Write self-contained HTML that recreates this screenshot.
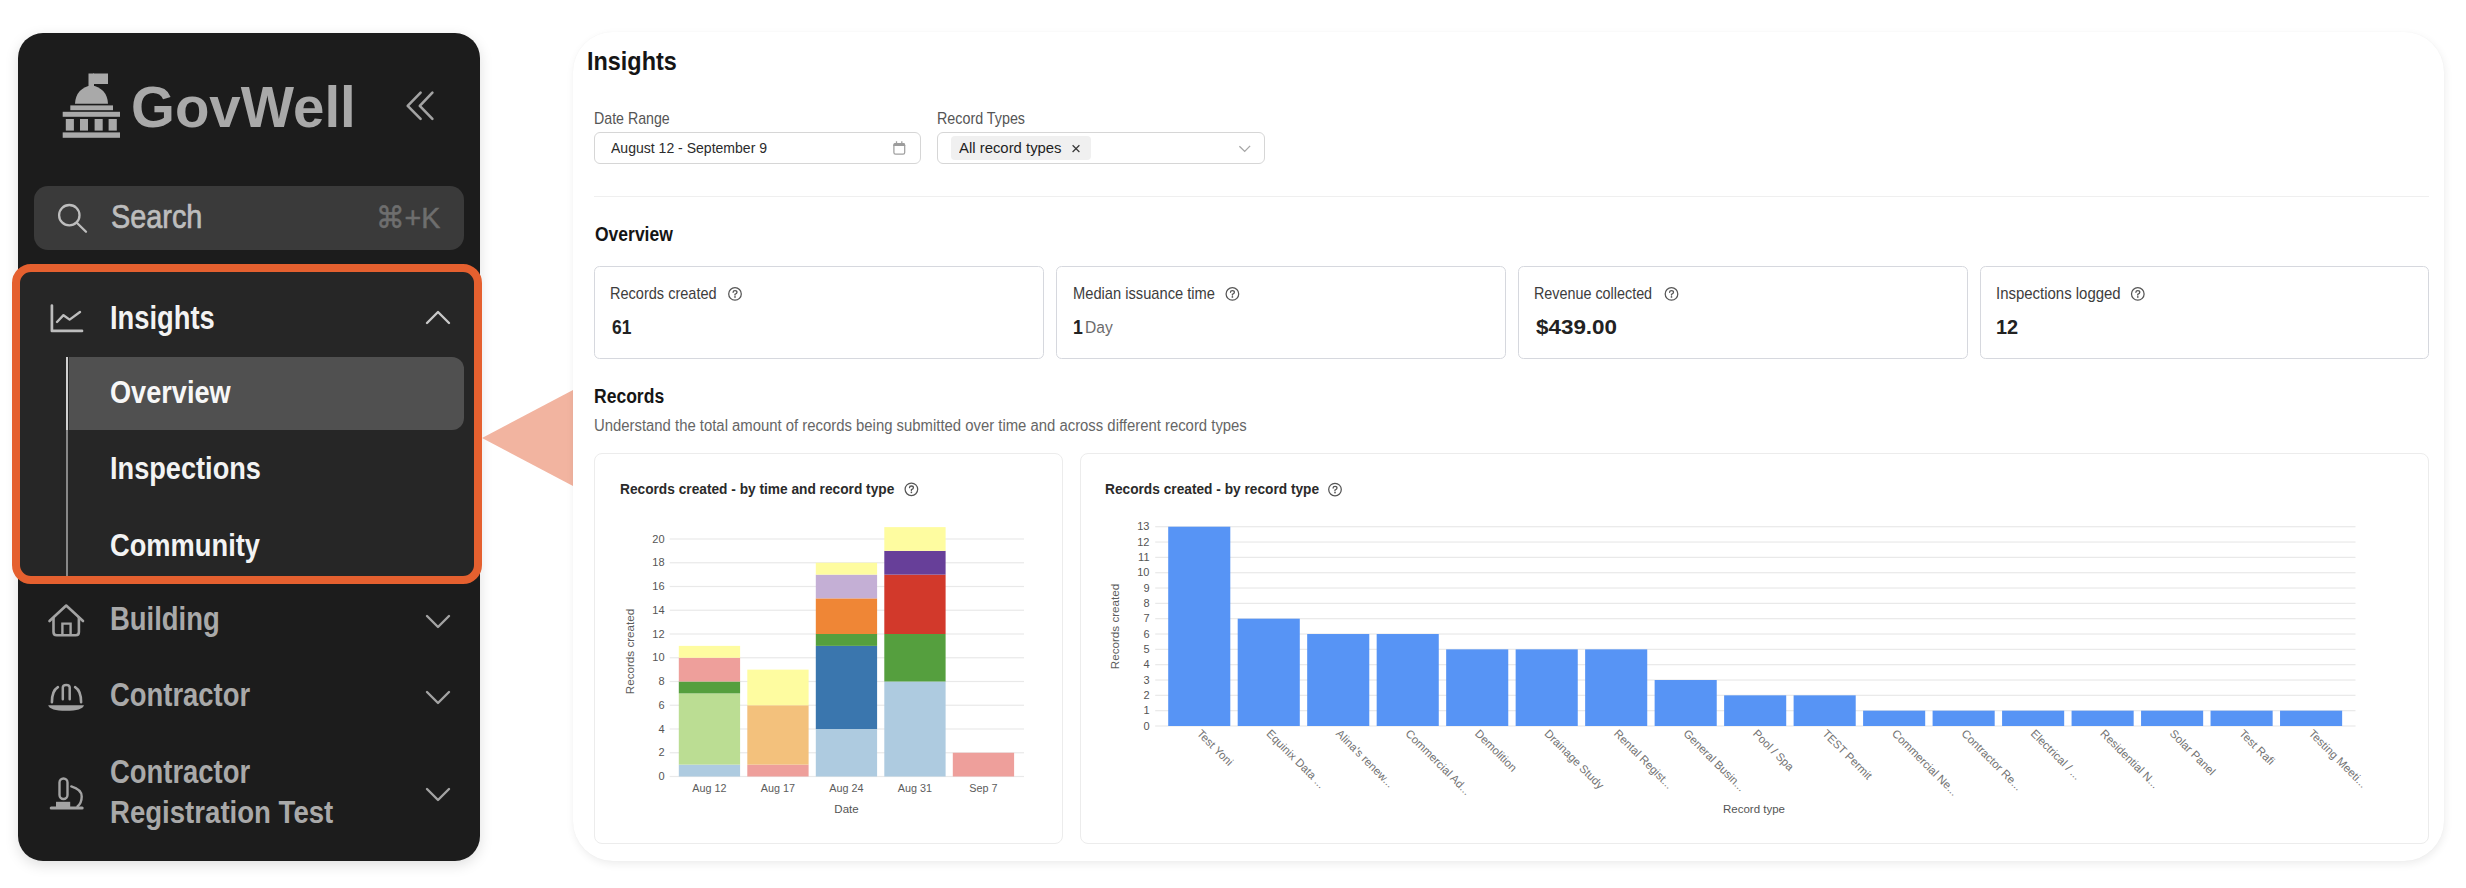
<!DOCTYPE html>
<html><head><meta charset="utf-8"><style>
html,body{margin:0;padding:0;}
body{width:2466px;height:888px;overflow:hidden;position:relative;background:#fff;font-family:"Liberation Sans", sans-serif;}
.t{position:absolute;white-space:nowrap;line-height:1;transform-origin:0 0;}
</style></head><body>
<div style="position:absolute;left:18px;top:33px;width:462px;height:827.5px;background:#1c1c1c;border-radius:25px;box-shadow:0 4px 14px rgba(0,0,0,0.13);"></div>
<svg style="position:absolute;left:0;top:0" width="480" height="888">
<rect x="88.5" y="73.5" width="5.5" height="14" fill="#a9a9a9"/>
<rect x="93" y="73.5" width="15" height="10.5" fill="#a9a9a9"/>
<path d="M75 103.8 A16.5 18 0 0 1 108 103.8 Z" fill="#a9a9a9"/>
<rect x="70.3" y="105.4" width="42.7" height="4.8" fill="#a9a9a9"/>
<rect x="62.7" y="111.8" width="57.3" height="5" fill="#a9a9a9"/>
<rect x="65.8" y="119" width="8.1" height="11.6" fill="#a9a9a9"/>
<rect x="80" y="119" width="8" height="11.6" fill="#a9a9a9"/>
<rect x="94.6" y="119" width="8.1" height="11.6" fill="#a9a9a9"/>
<rect x="108.6" y="119" width="8.2" height="11.6" fill="#a9a9a9"/>
<rect x="62.7" y="132.4" width="57.3" height="5.4" fill="#a9a9a9"/>
<path d="M420.6 92.7 L407.7 105.9 L420.6 118.9 M432.4 92.7 L419.8 105.9 L432.4 118.9" stroke="#a3a3a3" stroke-width="2.6" fill="none" stroke-linecap="round" stroke-linejoin="round"/>
</svg>
<div class="t" style="left:130.60px;top:78.29px;font-size:58px;font-weight:700;color:#a9a9a9;transform:scaleX(0.973);">GovWell</div>
<div style="position:absolute;left:34px;top:186px;width:430px;height:64px;background:#3a3a3a;border-radius:14px;"></div>
<svg style="position:absolute;left:0;top:0" width="480" height="888">
<circle cx="69.3" cy="215.2" r="10.2" stroke="#bdbdbd" stroke-width="2.3" fill="none"/>
<path d="M76.8 222.7 L86 231.8" stroke="#bdbdbd" stroke-width="2.3" stroke-linecap="round"/>
</svg>
<div class="t" style="left:110.60px;top:201.11px;font-size:32.7px;font-weight:400;color:#bdbdbd;transform:scaleX(0.882);-webkit-text-stroke:0.7px #bdbdbd;">Search</div>
<div class="t" style="left:375.60px;top:203.40px;font-size:30px;font-weight:400;color:#6e6e6e;transform:scaleX(0.953);-webkit-text-stroke:0.5px #6e6e6e;">&#8984;+K</div>
<div style="position:absolute;left:12.2px;top:263.5px;width:470px;height:320.5px;box-sizing:border-box;border:8.3px solid #e5602f;border-radius:19px;background:#262626;"></div>
<div style="position:absolute;left:66.3px;top:357px;width:2.2px;height:218.5px;background:#888;"></div>
<div style="position:absolute;left:66.3px;top:357px;width:2.2px;height:72.5px;background:#d0d0d0;"></div>
<div style="position:absolute;left:68.6px;top:357px;width:395.4px;height:72.5px;background:#505050;border-radius:0 12px 12px 0;"></div>
<svg style="position:absolute;left:0;top:0" width="480" height="888">
<path d="M51.9 305.5 V330.9 H82" stroke="#bdbdbd" stroke-width="2.7" fill="none" stroke-linecap="round" stroke-linejoin="round"/>
<path d="M57 322 L63.5 315.2 L69.6 319.6 L80 312" stroke="#bdbdbd" stroke-width="2.4" fill="none" stroke-linecap="round" stroke-linejoin="round"/>
<path d="M427 323 L438 312 L449 323" stroke="#c8c8c8" stroke-width="2.4" fill="none" stroke-linecap="round" stroke-linejoin="round"/>
</svg>
<div class="t" style="left:110.20px;top:301.57px;font-size:32.4px;font-weight:700;color:#f3f3f3;transform:scaleX(0.843);">Insights</div>
<div class="t" style="left:110.20px;top:376.81px;font-size:31.4px;font-weight:700;color:#f7f7f7;transform:scaleX(0.864);">Overview</div>
<div class="t" style="left:110.20px;top:452.41px;font-size:32px;font-weight:700;color:#f3f3f3;transform:scaleX(0.849);">Inspections</div>
<div class="t" style="left:110.20px;top:528.91px;font-size:32px;font-weight:700;color:#f3f3f3;transform:scaleX(0.852);">Community</div>
<svg style="position:absolute;left:0;top:0" width="480" height="888">
<path d="M49.5 621 L66.2 605.5 L83 621" stroke="#a3a3a3" stroke-width="2.6" fill="none" stroke-linecap="round" stroke-linejoin="round"/>
<path d="M53.5 617 V632 Q53.5 635.2 56.7 635.2 H75.7 Q78.9 635.2 78.9 632 V617" stroke="#a3a3a3" stroke-width="2.6" fill="none" stroke-linejoin="round"/>
<path d="M62.4 635.2 V623.6 H70.6 V635.2" stroke="#a3a3a3" stroke-width="2.4" fill="none"/>
<path d="M427 616 L438 627 L449 616" stroke="#a3a3a3" stroke-width="2.4" fill="none" stroke-linecap="round" stroke-linejoin="round"/>
<path d="M427 692 L438 703 L449 692" stroke="#a3a3a3" stroke-width="2.4" fill="none" stroke-linecap="round" stroke-linejoin="round"/>
<path d="M427 789 L438 800 L449 789" stroke="#a3a3a3" stroke-width="2.4" fill="none" stroke-linecap="round" stroke-linejoin="round"/>
<path d="M51.9 702.3 Q51.9 690.8 57.9 687.2 M81.1 702.3 Q81.1 690.8 75.1 687.2" stroke="#a3a3a3" stroke-width="2.6" fill="none" stroke-linecap="round"/>
<path d="M62.8 699.3 V687.6 Q62.8 684.9 66.25 684.9 Q69.7 684.9 69.7 687.6 V699.3" stroke="#a3a3a3" stroke-width="2.5" fill="none" stroke-linecap="round"/>
<path d="M48.2 705.3 H84 Q82.5 710.8 66 710.8 Q49.8 710.8 48.2 705.3 Z" fill="#a3a3a3"/>
<rect x="59.5" y="778.5" width="8" height="20.5" rx="4" stroke="#a3a3a3" stroke-width="2.4" fill="none"/>
<path d="M71.3 786.4 Q81.7 789.5 81.7 796.5 Q81.7 803 77.5 806.5" stroke="#a3a3a3" stroke-width="2.4" fill="none" stroke-linecap="round"/>
<rect x="56" y="801.8" width="14.2" height="5.5" fill="#a3a3a3"/>
<path d="M51.2 808.1 H82.2" stroke="#a3a3a3" stroke-width="3" stroke-linecap="round"/>
</svg>
<div class="t" style="left:110.30px;top:602.93px;font-size:32.8px;font-weight:700;color:#a9a9a9;transform:scaleX(0.837);">Building</div>
<div class="t" style="left:110.30px;top:679.23px;font-size:32.8px;font-weight:700;color:#a9a9a9;transform:scaleX(0.836);">Contractor</div>
<div class="t" style="left:109.90px;top:755.73px;font-size:32.8px;font-weight:700;color:#a9a9a9;transform:scaleX(0.836);">Contractor</div>
<div class="t" style="left:109.90px;top:796.41px;font-size:32px;font-weight:700;color:#a9a9a9;transform:scaleX(0.862);">Registration Test</div>
<svg style="position:absolute;left:0;top:0" width="600" height="888"><polygon points="482,438 573,390 573,486" fill="#f2b4a0"/></svg>
<div style="position:absolute;left:572.5px;top:32px;width:1871.7px;height:828.6px;background:#fff;border-radius:40px;box-shadow:1px 3px 9px rgba(0,0,0,0.075), 0 0 1.5px rgba(0,0,0,0.04);"></div>
<div class="t" style="left:586.80px;top:48.69px;font-size:25.4px;font-weight:700;color:#151515;transform:scaleX(0.922);">Insights</div>
<div class="t" style="left:594.20px;top:110.81px;font-size:15.7px;font-weight:400;color:#555;transform:scaleX(0.905);">Date Range</div>
<div class="t" style="left:937.00px;top:110.61px;font-size:15.7px;font-weight:400;color:#555;transform:scaleX(0.912);">Record Types</div>
<div style="position:absolute;left:594.3px;top:132.2px;width:326.5px;height:31.4px;box-sizing:border-box;border:1px solid #d6d6d6;border-radius:6px;background:#fff;"></div>
<div style="position:absolute;left:936.8px;top:132.2px;width:327.8px;height:31.4px;box-sizing:border-box;border:1px solid #d6d6d6;border-radius:6px;background:#fff;"></div>
<div class="t" style="left:610.90px;top:140.26px;font-size:15.4px;font-weight:400;color:#2b2b2b;transform:scaleX(0.912);">August 12 - September 9</div>
<div style="position:absolute;left:951.1px;top:136.3px;width:140.2px;height:23.3px;background:#f0f0f0;border-radius:4px;"></div>
<div class="t" style="left:959.30px;top:140.16px;font-size:15.4px;font-weight:400;color:#1f1f1f;transform:scaleX(0.967);">All record types</div>
<svg style="position:absolute;left:0;top:0" width="1300" height="200">
<rect x="893.9" y="143.6" width="10.8" height="10.6" rx="1.6" stroke="#a0a0a0" stroke-width="1.25" fill="none"/>
<path d="M893.3 145.2 Q893.3 143 895.5 143 H903 Q905.2 143 905.2 145.2 V145.9 H893.3 Z" fill="#9c9c9c"/>
<path d="M896.5 141.2 V143.5 M901.8 141.2 V143.5" stroke="#a0a0a0" stroke-width="1.3"/>
<path d="M1072.6 145.2 L1079.4 152 M1079.4 145.2 L1072.6 152" stroke="#3a3a3a" stroke-width="1.25"/>
<path d="M1239.4 146.3 L1244.7 151.4 L1250.1 145.9" stroke="#a6a6a6" stroke-width="1.35" fill="none"/>
</svg>
<div style="position:absolute;left:594px;top:196.2px;width:1835px;height:1px;background:#efefef;"></div>
<div class="t" style="left:594.50px;top:225.00px;font-size:19.6px;font-weight:700;color:#151515;transform:scaleX(0.893);">Overview</div>
<div style="position:absolute;left:594.0px;top:266.3px;width:450.3px;height:92.3px;box-sizing:border-box;border:1px solid #d6d8de;border-radius:5.5px;background:#fff;"></div>
<div class="t" style="left:610.40px;top:285.51px;font-size:15.7px;font-weight:400;color:#3d3d3d;transform:scaleX(0.926);">Records created</div>
<div class="t" style="left:611.80px;top:316.81px;font-size:20.3px;font-weight:700;color:#222;transform:scaleX(0.858);">61</div>
<div style="position:absolute;left:1056.4px;top:266.3px;width:449.6px;height:92.3px;box-sizing:border-box;border:1px solid #d6d8de;border-radius:5.5px;background:#fff;"></div>
<div class="t" style="left:1072.60px;top:285.51px;font-size:15.7px;font-weight:400;color:#3d3d3d;transform:scaleX(0.936);">Median issuance time</div>
<div class="t" style="left:1072.50px;top:316.81px;font-size:20.3px;font-weight:700;color:#222;transform:scaleX(0.871);">1</div>
<div class="t" style="left:1085.00px;top:319.78px;font-size:16.8px;font-weight:400;color:#6b6b6b;transform:scaleX(0.93);">Day</div>
<div style="position:absolute;left:1517.8px;top:266.3px;width:450.0px;height:92.3px;box-sizing:border-box;border:1px solid #d6d8de;border-radius:5.5px;background:#fff;"></div>
<div class="t" style="left:1534.10px;top:285.51px;font-size:15.7px;font-weight:400;color:#3d3d3d;transform:scaleX(0.915);">Revenue collected</div>
<div class="t" style="left:1535.50px;top:316.81px;font-size:20.3px;font-weight:700;color:#222;transform:scaleX(1.105);">$439.00</div>
<div style="position:absolute;left:1980.0px;top:266.3px;width:449.0px;height:92.3px;box-sizing:border-box;border:1px solid #d6d8de;border-radius:5.5px;background:#fff;"></div>
<div class="t" style="left:1996.10px;top:285.51px;font-size:15.7px;font-weight:400;color:#3d3d3d;transform:scaleX(0.953);">Inspections logged</div>
<div class="t" style="left:1996.00px;top:316.81px;font-size:20.3px;font-weight:700;color:#222;transform:scaleX(0.98);">12</div>
<svg style="position:absolute;left:0;top:0" width="2466" height="400"><circle cx="735.0" cy="293.9" r="6.3" stroke="#555" stroke-width="1.25" fill="none"/><path d="M733.1 292.29999999999995 Q733.1 290.59999999999997 735.0 290.59999999999997 Q737.0 290.59999999999997 737.0 292.29999999999995 Q737.0 293.59999999999997 735.0 294.29999999999995 V295.09999999999997" stroke="#555" stroke-width="1.3" fill="none" stroke-linecap="round"/><circle cx="735.0" cy="296.9" r="0.85" fill="#555"/><circle cx="1232.4" cy="293.9" r="6.3" stroke="#555" stroke-width="1.25" fill="none"/><path d="M1230.5 292.29999999999995 Q1230.5 290.59999999999997 1232.4 290.59999999999997 Q1234.4 290.59999999999997 1234.4 292.29999999999995 Q1234.4 293.59999999999997 1232.4 294.29999999999995 V295.09999999999997" stroke="#555" stroke-width="1.3" fill="none" stroke-linecap="round"/><circle cx="1232.4" cy="296.9" r="0.85" fill="#555"/><circle cx="1671.5" cy="293.9" r="6.3" stroke="#555" stroke-width="1.25" fill="none"/><path d="M1669.6 292.29999999999995 Q1669.6 290.59999999999997 1671.5 290.59999999999997 Q1673.5 290.59999999999997 1673.5 292.29999999999995 Q1673.5 293.59999999999997 1671.5 294.29999999999995 V295.09999999999997" stroke="#555" stroke-width="1.3" fill="none" stroke-linecap="round"/><circle cx="1671.5" cy="296.9" r="0.85" fill="#555"/><circle cx="2137.8" cy="293.9" r="6.3" stroke="#555" stroke-width="1.25" fill="none"/><path d="M2135.9 292.29999999999995 Q2135.9 290.59999999999997 2137.8 290.59999999999997 Q2139.8 290.59999999999997 2139.8 292.29999999999995 Q2139.8 293.59999999999997 2137.8 294.29999999999995 V295.09999999999997" stroke="#555" stroke-width="1.3" fill="none" stroke-linecap="round"/><circle cx="2137.8" cy="296.9" r="0.85" fill="#555"/></svg>
<div class="t" style="left:593.60px;top:387.09px;font-size:19.5px;font-weight:700;color:#151515;transform:scaleX(0.899);">Records</div>
<div class="t" style="left:593.60px;top:417.65px;font-size:16px;font-weight:400;color:#666;transform:scaleX(0.9295);">Understand the total amount of records being submitted over time and across different record types</div>
<div style="position:absolute;left:594.2px;top:453.3px;width:468.4px;height:390.3px;box-sizing:border-box;border:1px solid #ececec;border-radius:8px;background:#fff;"></div>
<div style="position:absolute;left:1079.6px;top:453.3px;width:1349.1px;height:390.3px;box-sizing:border-box;border:1px solid #ececec;border-radius:8px;background:#fff;"></div>
<div class="t" style="left:619.70px;top:481.00px;font-size:15px;font-weight:700;color:#2a2a2a;transform:scaleX(0.914);">Records created - by time and record type</div>
<div class="t" style="left:1105.30px;top:481.00px;font-size:15px;font-weight:700;color:#2a2a2a;transform:scaleX(0.914);">Records created - by record type</div>
<svg style="position:absolute;left:0;top:0;font-family:'Liberation Sans',sans-serif" width="2466" height="888"><circle cx="911.4" cy="489.3" r="6.3" stroke="#555" stroke-width="1.25" fill="none"/><path d="M909.5 487.7 Q909.5 486.0 911.4 486.0 Q913.4 486.0 913.4 487.7 Q913.4 489.0 911.4 489.7 V490.5" stroke="#555" stroke-width="1.3" fill="none" stroke-linecap="round"/><circle cx="911.4" cy="492.3" r="0.85" fill="#555"/><circle cx="1335.0" cy="489.6" r="6.3" stroke="#555" stroke-width="1.25" fill="none"/><path d="M1333.1 488.0 Q1333.1 486.3 1335.0 486.3 Q1337.0 486.3 1337.0 488.0 Q1337.0 489.3 1335.0 490.0 V490.8" stroke="#555" stroke-width="1.3" fill="none" stroke-linecap="round"/><circle cx="1335.0" cy="492.6" r="0.85" fill="#555"/><rect x="669.7" y="775.90" width="354.29999999999995" height="1.2" fill="#e9e9e9"/><text x="664.6" y="780.20" text-anchor="end" font-size="11" fill="#555" textLength="" >0</text><rect x="669.7" y="752.15" width="354.29999999999995" height="1.2" fill="#e9e9e9"/><text x="664.6" y="756.45" text-anchor="end" font-size="11" fill="#555" textLength="" >2</text><rect x="669.7" y="728.40" width="354.29999999999995" height="1.2" fill="#e9e9e9"/><text x="664.6" y="732.70" text-anchor="end" font-size="11" fill="#555" textLength="" >4</text><rect x="669.7" y="704.65" width="354.29999999999995" height="1.2" fill="#e9e9e9"/><text x="664.6" y="708.95" text-anchor="end" font-size="11" fill="#555" textLength="" >6</text><rect x="669.7" y="680.90" width="354.29999999999995" height="1.2" fill="#e9e9e9"/><text x="664.6" y="685.20" text-anchor="end" font-size="11" fill="#555" textLength="" >8</text><rect x="669.7" y="657.15" width="354.29999999999995" height="1.2" fill="#e9e9e9"/><text x="664.6" y="661.45" text-anchor="end" font-size="11" fill="#555" textLength="" >10</text><rect x="669.7" y="633.40" width="354.29999999999995" height="1.2" fill="#e9e9e9"/><text x="664.6" y="637.70" text-anchor="end" font-size="11" fill="#555" textLength="" >12</text><rect x="669.7" y="609.65" width="354.29999999999995" height="1.2" fill="#e9e9e9"/><text x="664.6" y="613.95" text-anchor="end" font-size="11" fill="#555" textLength="" >14</text><rect x="669.7" y="585.90" width="354.29999999999995" height="1.2" fill="#e9e9e9"/><text x="664.6" y="590.20" text-anchor="end" font-size="11" fill="#555" textLength="" >16</text><rect x="669.7" y="562.15" width="354.29999999999995" height="1.2" fill="#e9e9e9"/><text x="664.6" y="566.45" text-anchor="end" font-size="11" fill="#555" textLength="" >18</text><rect x="669.7" y="538.40" width="354.29999999999995" height="1.2" fill="#e9e9e9"/><text x="664.6" y="542.70" text-anchor="end" font-size="11" fill="#555" textLength="" >20</text><rect x="678.80" y="764.62" width="61.3" height="11.88" fill="#aecbe0"/><rect x="678.80" y="693.38" width="61.3" height="71.25" fill="#bbdd93"/><rect x="678.80" y="681.50" width="61.3" height="11.88" fill="#559f3e"/><rect x="678.80" y="657.75" width="61.3" height="23.75" fill="#ee9f9b"/><rect x="678.80" y="645.88" width="61.3" height="11.88" fill="#fefca0"/><text transform="translate(709.45 792) scale(0.94 1)" text-anchor="middle" font-size="11.5" fill="#5c5c5c">Aug 12</text><rect x="747.30" y="764.62" width="61.3" height="11.88" fill="#ee9f9b"/><rect x="747.30" y="705.25" width="61.3" height="59.38" fill="#f3c17c"/><rect x="747.30" y="669.62" width="61.3" height="35.62" fill="#fefca0"/><text transform="translate(777.95 792) scale(0.94 1)" text-anchor="middle" font-size="11.5" fill="#5c5c5c">Aug 17</text><rect x="815.80" y="729.00" width="61.3" height="47.50" fill="#aecbe0"/><rect x="815.80" y="645.88" width="61.3" height="83.12" fill="#3a76ae"/><rect x="815.80" y="634.00" width="61.3" height="11.88" fill="#559f3e"/><rect x="815.80" y="598.38" width="61.3" height="35.62" fill="#ef8636"/><rect x="815.80" y="574.62" width="61.3" height="23.75" fill="#c4afd5"/><rect x="815.80" y="562.75" width="61.3" height="11.88" fill="#fefca0"/><text transform="translate(846.45 792) scale(0.94 1)" text-anchor="middle" font-size="11.5" fill="#5c5c5c">Aug 24</text><rect x="884.30" y="681.50" width="61.3" height="95.00" fill="#aecbe0"/><rect x="884.30" y="634.00" width="61.3" height="47.50" fill="#559f3e"/><rect x="884.30" y="574.62" width="61.3" height="59.38" fill="#d2392b"/><rect x="884.30" y="550.88" width="61.3" height="23.75" fill="#673f99"/><rect x="884.30" y="527.12" width="61.3" height="23.75" fill="#fefca0"/><text transform="translate(914.95 792) scale(0.94 1)" text-anchor="middle" font-size="11.5" fill="#5c5c5c">Aug 31</text><rect x="952.80" y="752.75" width="61.3" height="23.75" fill="#ee9f9b"/><text transform="translate(983.45 792) scale(0.94 1)" text-anchor="middle" font-size="11.5" fill="#5c5c5c">Sep 7</text><text x="846.5" y="812.9" text-anchor="middle" font-size="11.5" fill="#555">Date</text><text transform="translate(633.6 651.5) rotate(-90)" text-anchor="middle" font-size="11.65" fill="#5c5c5c">Records created</text><rect x="1155.2" y="725.40" width="1200.3" height="1.2" fill="#e9e9e9"/><text x="1149.5" y="729.70" text-anchor="end" font-size="11" fill="#555">0</text><rect x="1155.2" y="710.07" width="1200.3" height="1.2" fill="#e9e9e9"/><text x="1149.5" y="714.37" text-anchor="end" font-size="11" fill="#555">1</text><rect x="1155.2" y="694.74" width="1200.3" height="1.2" fill="#e9e9e9"/><text x="1149.5" y="699.04" text-anchor="end" font-size="11" fill="#555">2</text><rect x="1155.2" y="679.41" width="1200.3" height="1.2" fill="#e9e9e9"/><text x="1149.5" y="683.71" text-anchor="end" font-size="11" fill="#555">3</text><rect x="1155.2" y="664.08" width="1200.3" height="1.2" fill="#e9e9e9"/><text x="1149.5" y="668.38" text-anchor="end" font-size="11" fill="#555">4</text><rect x="1155.2" y="648.75" width="1200.3" height="1.2" fill="#e9e9e9"/><text x="1149.5" y="653.05" text-anchor="end" font-size="11" fill="#555">5</text><rect x="1155.2" y="633.42" width="1200.3" height="1.2" fill="#e9e9e9"/><text x="1149.5" y="637.72" text-anchor="end" font-size="11" fill="#555">6</text><rect x="1155.2" y="618.09" width="1200.3" height="1.2" fill="#e9e9e9"/><text x="1149.5" y="622.39" text-anchor="end" font-size="11" fill="#555">7</text><rect x="1155.2" y="602.76" width="1200.3" height="1.2" fill="#e9e9e9"/><text x="1149.5" y="607.06" text-anchor="end" font-size="11" fill="#555">8</text><rect x="1155.2" y="587.43" width="1200.3" height="1.2" fill="#e9e9e9"/><text x="1149.5" y="591.73" text-anchor="end" font-size="11" fill="#555">9</text><rect x="1155.2" y="572.10" width="1200.3" height="1.2" fill="#e9e9e9"/><text x="1149.5" y="576.40" text-anchor="end" font-size="11" fill="#555">10</text><rect x="1155.2" y="556.77" width="1200.3" height="1.2" fill="#e9e9e9"/><text x="1149.5" y="561.07" text-anchor="end" font-size="11" fill="#555">11</text><rect x="1155.2" y="541.44" width="1200.3" height="1.2" fill="#e9e9e9"/><text x="1149.5" y="545.74" text-anchor="end" font-size="11" fill="#555">12</text><rect x="1155.2" y="526.11" width="1200.3" height="1.2" fill="#e9e9e9"/><text x="1149.5" y="530.41" text-anchor="end" font-size="11" fill="#555">13</text><rect x="1168.20" y="526.71" width="62.1" height="199.29" fill="#5794f5"/><text transform="translate(1202.25 728.3) rotate(45)" dy="8.5" font-size="11.4" fill="#737373">Test Yoni</text><rect x="1237.69" y="618.69" width="62.1" height="107.31" fill="#5794f5"/><text transform="translate(1271.74 728.3) rotate(45)" dy="8.5" font-size="11.4" fill="#737373">Equinix Data ...</text><rect x="1307.18" y="634.02" width="62.1" height="91.98" fill="#5794f5"/><text transform="translate(1341.23 728.3) rotate(45)" dy="8.5" font-size="11.4" fill="#737373">Alina's renew...</text><rect x="1376.67" y="634.02" width="62.1" height="91.98" fill="#5794f5"/><text transform="translate(1410.72 728.3) rotate(45)" dy="8.5" font-size="11.4" fill="#737373">Commercial Ad...</text><rect x="1446.16" y="649.35" width="62.1" height="76.65" fill="#5794f5"/><text transform="translate(1480.21 728.3) rotate(45)" dy="8.5" font-size="11.4" fill="#737373">Demolition</text><rect x="1515.65" y="649.35" width="62.1" height="76.65" fill="#5794f5"/><text transform="translate(1549.70 728.3) rotate(45)" dy="8.5" font-size="11.4" fill="#737373">Drainage Study</text><rect x="1585.14" y="649.35" width="62.1" height="76.65" fill="#5794f5"/><text transform="translate(1619.19 728.3) rotate(45)" dy="8.5" font-size="11.4" fill="#737373">Rental Regist...</text><rect x="1654.63" y="680.01" width="62.1" height="45.99" fill="#5794f5"/><text transform="translate(1688.68 728.3) rotate(45)" dy="8.5" font-size="11.4" fill="#737373">General Busin...</text><rect x="1724.12" y="695.34" width="62.1" height="30.66" fill="#5794f5"/><text transform="translate(1758.17 728.3) rotate(45)" dy="8.5" font-size="11.4" fill="#737373">Pool / Spa</text><rect x="1793.61" y="695.34" width="62.1" height="30.66" fill="#5794f5"/><text transform="translate(1827.66 728.3) rotate(45)" dy="8.5" font-size="11.4" fill="#737373">TEST Permit</text><rect x="1863.10" y="710.67" width="62.1" height="15.33" fill="#5794f5"/><text transform="translate(1897.15 728.3) rotate(45)" dy="8.5" font-size="11.4" fill="#737373">Commercial Ne...</text><rect x="1932.59" y="710.67" width="62.1" height="15.33" fill="#5794f5"/><text transform="translate(1966.64 728.3) rotate(45)" dy="8.5" font-size="11.4" fill="#737373">Contractor Re...</text><rect x="2002.08" y="710.67" width="62.1" height="15.33" fill="#5794f5"/><text transform="translate(2036.13 728.3) rotate(45)" dy="8.5" font-size="11.4" fill="#737373">Electrical / ...</text><rect x="2071.57" y="710.67" width="62.1" height="15.33" fill="#5794f5"/><text transform="translate(2105.62 728.3) rotate(45)" dy="8.5" font-size="11.4" fill="#737373">Residential N...</text><rect x="2141.06" y="710.67" width="62.1" height="15.33" fill="#5794f5"/><text transform="translate(2175.11 728.3) rotate(45)" dy="8.5" font-size="11.4" fill="#737373">Solar Panel</text><rect x="2210.55" y="710.67" width="62.1" height="15.33" fill="#5794f5"/><text transform="translate(2244.60 728.3) rotate(45)" dy="8.5" font-size="11.4" fill="#737373">Test Rafi</text><rect x="2280.04" y="710.67" width="62.1" height="15.33" fill="#5794f5"/><text transform="translate(2314.09 728.3) rotate(45)" dy="8.5" font-size="11.4" fill="#737373">Testing Meeti...</text><text x="1754" y="812.9" text-anchor="middle" font-size="11.5" fill="#555">Record type</text><text transform="translate(1119.2 626.5) rotate(-90)" text-anchor="middle" font-size="11.65" fill="#5c5c5c">Records created</text></svg>
</body></html>
